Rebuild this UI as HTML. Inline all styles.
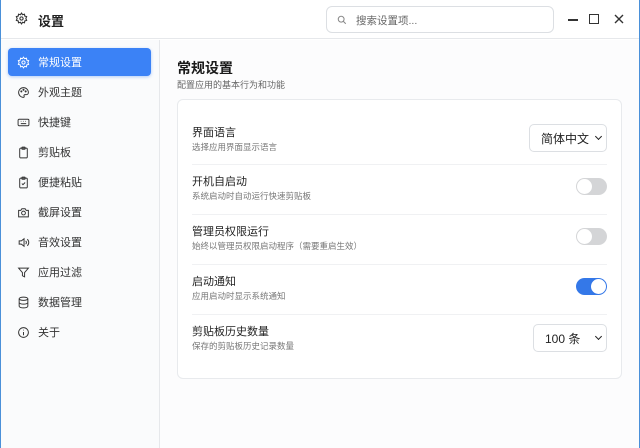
<!DOCTYPE html><html><head><meta charset="utf-8"><style>
*{box-sizing:border-box;margin:0;padding:0}
body{width:640px;height:448px;overflow:hidden;font-family:"Liberation Sans","Noto Sans CJK SC",sans-serif;background:#fff;position:relative;color:#222}
.frame{position:absolute;inset:0;border-left:1px solid #4a90d9;border-right:1px solid #4a90d9}
.hdr{position:absolute;left:0;top:0;width:640px;height:39px;border-bottom:1px solid #e6e8eb;background:#fff}
.side{position:absolute;left:0;top:40px;width:160px;height:408px;background:#fafbfc;border-right:1px solid #e6e8eb}
.main{position:absolute;left:160px;top:40px;right:0;bottom:0;background:#fcfcfd}
.item{position:absolute;left:8px;width:143px;height:28px;font-size:11px;color:#333;display:flex;align-items:center;padding-left:9px}
.item svg{width:13px;height:13px;margin-right:8px;fill:none;stroke:#333;stroke-width:1.8}
.item.act{background:#3b82f6;color:#fff;border-radius:4px;box-shadow:0 1px 3px rgba(59,130,246,.4)}
.item.act svg{stroke:#fff}
.card{position:absolute;left:177px;top:99px;width:445px;height:280px;border:1px solid #e8eaed;border-radius:6px;background:#fff}
.row{position:absolute;left:14px;right:14px;height:50px;border-bottom:1px solid #f0f1f3}
.t{position:absolute;left:0;font-size:11px;color:#222}
.s{position:absolute;left:0;font-size:8.5px;color:#777}
.tg{position:absolute;right:0;width:31px;height:17px;border-radius:9px;background:#d4d5d7}
.tg::after{content:"";position:absolute;left:1px;top:1px;width:15px;height:15px;border-radius:50%;background:#fff}
.tg.on{background:#3478e8}.tg.on::after{left:15px}
.sel{position:absolute;right:0;height:28px;border:1px solid #dcdfe3;border-radius:5px;font-size:12px;display:flex;align-items:center;padding-left:11px;background:#fff}
.sel i{position:absolute;right:5px;top:9px;width:5px;height:5px;border-right:1.8px solid #222;border-bottom:1.8px solid #222;transform:rotate(45deg)}
</style></head><body>
<div class="hdr">
<svg style="position:absolute;left:15px;top:12px" width="13" height="13" viewBox="0 0 24 24" fill="none" stroke="#333" stroke-width="2"><circle cx="12" cy="12" r="3"/><path d="M12 2l2 3 3.5-1 .5 3.5 3.5 1-1.5 3.5 1.5 3.5-3.5 1-.5 3.5-3.5-1-2 3-2-3-3.5 1-.5-3.5-3.5-1L4 12 2.5 8.5 6 7.5 6.5 4 10 5z"/></svg>
<div style="position:absolute;left:38px;top:11px;font-size:13px;font-weight:bold;color:#222">设置</div>
<div style="position:absolute;left:326px;top:6px;width:228px;height:27px;border:1px solid #dcdfe3;border-radius:6px;background:#fff">
<svg style="position:absolute;left:10px;top:8px" width="10" height="10" viewBox="0 0 24 24" fill="none" stroke="#888" stroke-width="2.5"><circle cx="10" cy="10" r="7"/><path d="M15 15l6 6"/></svg>
<span style="position:absolute;left:29px;top:6px;font-size:10.5px;color:#666">搜索设置项...</span></div>
<div style="position:absolute;left:568px;top:19px;width:10px;height:1.5px;background:#333"></div>
<div style="position:absolute;left:589px;top:14px;width:10px;height:10px;border:1.5px solid #333"></div>
<svg style="position:absolute;left:614px;top:14px" width="10" height="10" viewBox="0 0 10 10" stroke="#333" stroke-width="1.4"><path d="M1 1l8 8M9 1l-8 8"/></svg>
</div>
<div class="side">
<div class="item act" style="top:8px"><svg viewBox="0 0 24 24"><circle cx="12" cy="12" r="3"/><path d="M12 2l2 3 3.5-1 .5 3.5 3.5 1-1.5 3.5 1.5 3.5-3.5 1-.5 3.5-3.5-1-2 3-2-3-3.5 1-.5-3.5-3.5-1L4 12 2.5 8.5 6 7.5 6.5 4 10 5z"/></svg>常规设置</div>
<div class="item" style="top:38px"><svg viewBox="0 0 24 24"><path d="M12 3a9 9 0 100 18c1.5 0 1.5-1.5 1-2.5s0-2.5 2-2.5h2a4 4 0 004-4c0-5-4-9-9-9z"/><circle cx="8" cy="10" r="1"/><circle cx="12" cy="7" r="1"/><circle cx="16" cy="10" r="1"/></svg>外观主题</div>
<div class="item" style="top:68px"><svg viewBox="0 0 24 24"><rect x="2" y="6" width="20" height="12" rx="2"/><path d="M7 14h10M7 10h1M11 10h1M15 10h1"/></svg>快捷键</div>
<div class="item" style="top:98px"><svg viewBox="0 0 24 24"><rect x="5" y="4" width="14" height="18" rx="2"/><rect x="9" y="2" width="6" height="4" rx="1"/></svg>剪贴板</div>
<div class="item" style="top:128px"><svg viewBox="0 0 24 24"><rect x="5" y="4" width="14" height="18" rx="2"/><rect x="9" y="2" width="6" height="4" rx="1"/><path d="M9 14l2 2 4-4"/></svg>便捷粘贴</div>
<div class="item" style="top:158px"><svg viewBox="0 0 24 24"><path d="M3 8h4l2-3h6l2 3h4v12H3z"/><circle cx="12" cy="13" r="3.5"/></svg>截屏设置</div>
<div class="item" style="top:188px"><svg viewBox="0 0 24 24"><path d="M4 9h4l5-4v14l-5-4H4z"/><path d="M16 9a4 4 0 010 6M19 6a8 8 0 010 12"/></svg>音效设置</div>
<div class="item" style="top:218px"><svg viewBox="0 0 24 24"><path d="M3 4h18l-7 8v8l-4-2v-6z"/></svg>应用过滤</div>
<div class="item" style="top:248px"><svg viewBox="0 0 24 24"><ellipse cx="12" cy="5" rx="8" ry="3"/><path d="M4 5v14c0 1.7 3.6 3 8 3s8-1.3 8-3V5M4 12c0 1.7 3.6 3 8 3s8-1.3 8-3"/></svg>数据管理</div>
<div class="item" style="top:278px"><svg viewBox="0 0 24 24"><circle cx="12" cy="12" r="9"/><path d="M12 11v6M12 7v1"/></svg>关于</div>
</div>
<div class="main">
<div style="position:absolute;left:17px;top:18px;font-size:14px;font-weight:bold;color:#1a1a1a">常规设置</div>
<div style="position:absolute;left:17px;top:38px;font-size:9px;color:#666">配置应用的基本行为和功能</div>
</div>
<div class="card">
<div class="row" style="top:15px"><div class="t" style="top:9px">界面语言</div><div class="s" style="top:26px">选择应用界面显示语言</div><div class="sel" style="top:9px;width:78px">简体中文<i></i></div></div>
<div class="row" style="top:65px"><div class="t" style="top:8px">开机自启动</div><div class="s" style="top:25px">系统启动时自动运行快速剪贴板</div><div class="tg" style="top:13px"></div></div>
<div class="row" style="top:115px"><div class="t" style="top:8px">管理员权限运行</div><div class="s" style="top:25px">始终以管理员权限启动程序（需要重启生效）</div><div class="tg" style="top:13px"></div></div>
<div class="row" style="top:165px"><div class="t" style="top:8px">启动通知</div><div class="s" style="top:25px">应用启动时显示系统通知</div><div class="tg on" style="top:13px"></div></div>
<div class="row" style="top:215px;border:none"><div class="t" style="top:8px">剪贴板历史数量</div><div class="s" style="top:25px">保存的剪贴板历史记录数量</div><div class="sel" style="top:9px;width:74px">100 条<i></i></div></div>
</div>
<div class="frame"></div>
</body></html>
